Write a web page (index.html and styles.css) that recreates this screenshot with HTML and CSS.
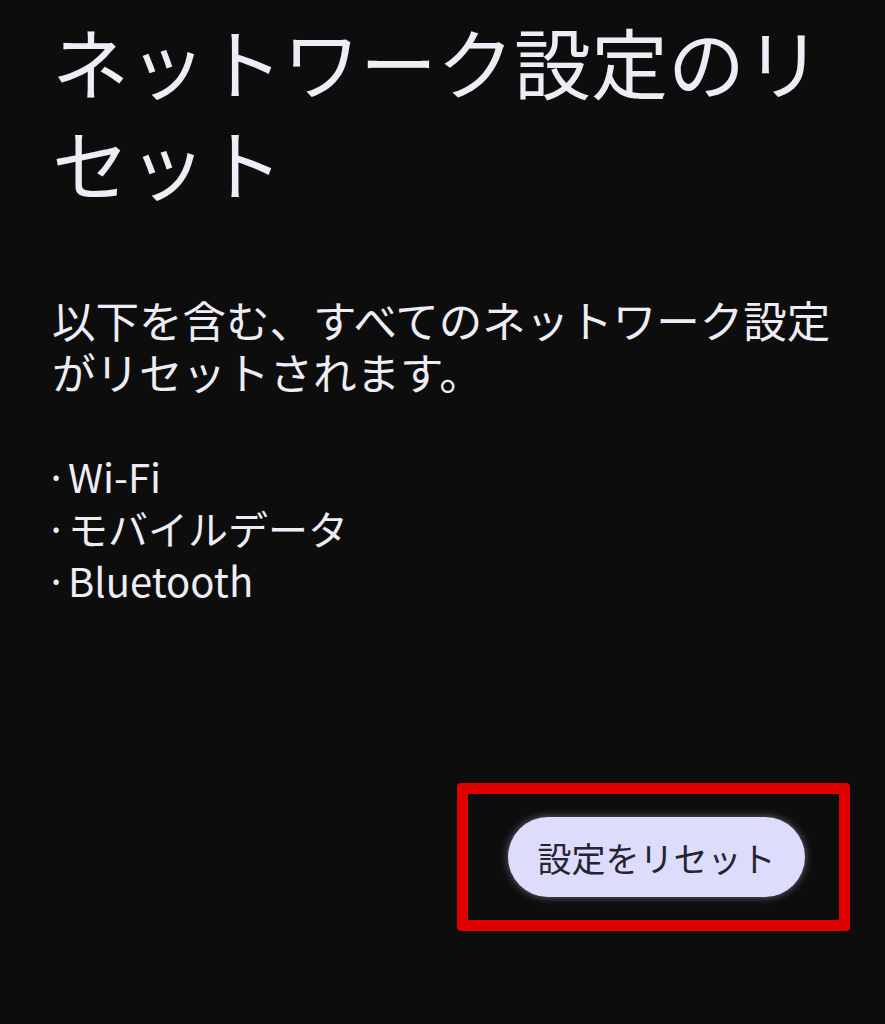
FILE: index.html
```html
<!DOCTYPE html>
<html lang="ja">
<head>
    <meta charset="UTF-8">
    <meta name="viewport" content="width=device-width, initial-scale=1.0">
    <title>ネットワーク設定のリセット</title>
    <link rel="stylesheet" href="styles.css">
</head>
<body>
    <div class="screen">
        <h1 class="title">ネットワーク設定のリセット</h1>
        <p class="desc">以下を含む、すべてのネットワーク設定がリセットされます。</p>
        <ul class="items">
            <li>Wi-Fi</li>
            <li>モバイルデータ</li>
            <li>Bluetooth</li>
        </ul>
        <div class="actions">
            <div class="highlight">
                <button class="btn-reset">設定をリセット</button>
            </div>
        </div>
    </div>
</body>
</html>
```

FILE: styles.css
```css
body {
    background: #0d0d0d;
    color: #eeedf5;
    font-family: "Noto Sans CJK JP", "Noto Sans", sans-serif;
    margin: 0;
    padding: 0;
}
.screen {
    padding: 0 40px 0 52px;
    display: flex;
    flex-direction: column;
}
.title {
    font-size: 77px;
    font-weight: 400;
    line-height: 101px;
    margin: 0;
    margin-top: 10px;
}
.desc {
    font-size: 43.5px;
    line-height: 52px;
    margin: 82px 0 0;
}
.items {
    list-style: none;
    margin: 52px 0 0;
    padding: 0;
    font-size: 40px;
    line-height: 52px;
}
.items li {
    height: 52px;
}
.items li::before {
    content: '\00B7';
    display: inline-block;
    width: 16px;
    margin-left: -7px;
    margin-right: 7px;
}
.actions {
    display: flex;
    justify-content: flex-end;
    margin-top: 177px;
    margin-right: -5px;
}
.highlight {
    border: 11px solid #e00000;
    border-radius: 4px;
    padding: 23px 35px 0 40px;
    box-sizing: border-box;
    width: 393px;
    height: 148px;
}
.btn-reset {
    width: 297px;
    height: 80px;
    border: none;
    border-radius: 40px;
    background: #dddcfc;
    color: #25252f;
    font-family: "Noto Sans CJK JP", sans-serif;
    font-size: 34px;
    box-shadow: 0 0 8px rgba(220, 220, 255, 0.45);
    cursor: pointer;
}
```
